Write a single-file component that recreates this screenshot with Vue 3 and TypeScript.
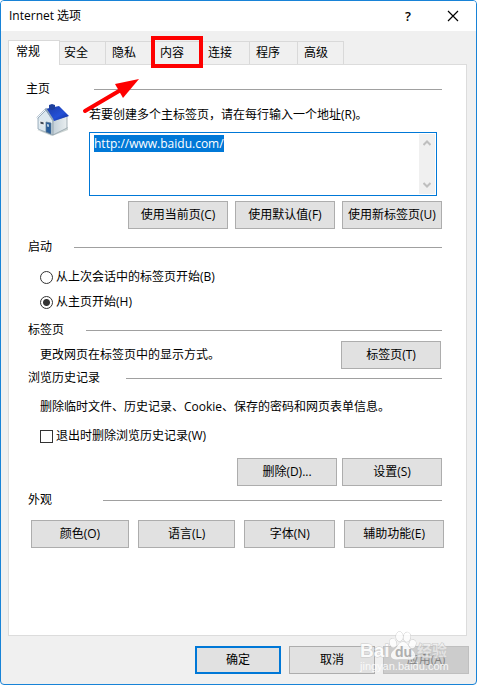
<script setup lang="ts">
import { onMounted, ref } from 'vue'

interface Tab {
  id: string
  label: string
}

const tabs: Tab[] = [
  { id: 'general', label: '常规' },
  { id: 'security', label: '安全' },
  { id: 'privacy', label: '隐私' },
  { id: 'content', label: '内容' },
  { id: 'connections', label: '连接' },
  { id: 'programs', label: '程序' },
  { id: 'advanced', label: '高级' },
]

const activeTab = ref('general')
const homepages = ref('http://www.baidu.com/')
const startup = ref('home')
const deleteOnExit = ref(false)
const homeInput = ref<HTMLTextAreaElement | null>(null)

const homeButtons = ['使用当前页(C)', '使用默认值(F)', '使用新标签页(U)']
const looksButtons = ['颜色(O)', '语言(L)', '字体(N)', '辅助功能(E)']

onMounted(() => {
  homeInput.value?.focus()
  homeInput.value?.select()
})
</script>

<template>
  <div class="dialog">
    <header class="titlebar">
      <h1 class="title">Internet 选项</h1>
      <button class="caption help" type="button">?</button>
      <button class="caption" type="button" aria-label="关闭">
        <svg width="12" height="12" viewBox="0 0 12 12">
          <path d="M1 1L11 11M11 1L1 11" stroke="#000" stroke-width="1.2" fill="none" />
        </svg>
      </button>
    </header>

    <nav class="tabs" role="tablist">
      <button
        v-for="tab in tabs"
        :key="tab.id"
        type="button"
        role="tab"
        class="tab"
        :class="{ active: tab.id === activeTab }"
        :aria-selected="tab.id === activeTab"
        @click="activeTab = tab.id"
      >
        {{ tab.label }}
        <span v-if="tab.id === 'content'" class="marker"></span>
      </button>
    </nav>

    <main class="panel">
      <section>
        <h2 class="heading home-heading">主页</h2>
        <div class="home">
          <svg class="house" width="36" height="34" viewBox="0 0 36 34">
            <defs>
              <linearGradient id="roof" x1="0" y1="0" x2="1" y2="1">
                <stop offset="0" stop-color="#1b3ba6" />
                <stop offset="0.6" stop-color="#2450d6" />
                <stop offset="1" stop-color="#0d2a94" />
              </linearGradient>
              <linearGradient id="side" x1="0" y1="0" x2="1" y2="0">
                <stop offset="0" stop-color="#c3d0d8" />
                <stop offset="1" stop-color="#e9eef0" />
              </linearGradient>
            </defs>
            <path d="M2 26L17 32L33 26L33 23L18 28Z" fill="#a9b5b4" opacity="0.6" />
            <path d="M3 14L11 6L18 17L18 31L3 25Z" fill="#dce8ef" stroke="#8ca0ae" stroke-width="0.8" />
            <path d="M18 17L32 12L32 24L18 31Z" fill="url(#side)" stroke="#92a1aa" stroke-width="0.8" />
            <path d="M10 5L24 2L34 12L19 17Z" fill="url(#roof)" />
            <path d="M14 5V1L17 0L20 1V5L17 6Z" fill="#1d3f9c" />
            <path d="M2 14L11 5L18 16" fill="none" stroke="#8fa5b8" stroke-width="1.5" />
            <path d="M2 14L10 6" stroke="#f3f8fb" stroke-width="1" />
            <path d="M5 17L9 18V21L5 20Z" fill="#3b4652" stroke="#fff" stroke-width="0.8" />
            <path d="M11 18L16 19V30L11 28Z" fill="#285d9a" stroke="#5d7890" stroke-width="0.7" />
            <path d="M12 20L14 20.500V23L12 22.500Z" fill="#b5cce0" />
          </svg>
          <div class="home-form">
            <label class="home-label" for="homepages">若要创建多个主标签页，请在每行输入一个地址(R)。</label>
            <div class="address">
              <textarea id="homepages" ref="homeInput" v-model="homepages" spellcheck="false"></textarea>
              <div class="scroll" aria-hidden="true">
                <svg width="8" height="6" viewBox="0 0 8 6"><path d="M0.500 5L4 1.500L7.500 5" /></svg>
                <svg width="8" height="6" viewBox="0 0 8 6"><path d="M0.500 1L4 4.500L7.500 1" /></svg>
              </div>
            </div>
          </div>
        </div>
        <div class="actions home-actions">
          <button v-for="label in homeButtons" :key="label" type="button" class="btn">{{ label }}</button>
        </div>
      </section>

      <section class="startup">
        <h2 class="heading">启动</h2>
        <div class="radios">
          <label class="option">
            <input v-model="startup" type="radio" name="startup" value="last" />从上次会话中的标签页开始(B)
          </label>
          <label class="option">
            <input v-model="startup" type="radio" name="startup" value="home" />从主页开始(H)
          </label>
        </div>
      </section>

      <section>
        <h2 class="heading">标签页</h2>
        <div class="tab-settings">
          <p>更改网页在标签页中的显示方式。</p>
          <button type="button" class="btn">标签页(T)</button>
        </div>
      </section>

      <section>
        <h2 class="heading history-heading">浏览历史记录</h2>
        <div class="history">
          <p>删除临时文件、历史记录、Cookie、保存的密码和网页表单信息。</p>
          <label class="option">
            <input v-model="deleteOnExit" type="checkbox" />退出时删除浏览历史记录(W)
          </label>
        </div>
        <div class="actions">
          <button type="button" class="btn">删除(D)...</button>
          <button type="button" class="btn">设置(S)</button>
        </div>
      </section>

      <section class="looks">
        <h2 class="heading looks-heading">外观</h2>
        <div class="looks-actions">
          <button v-for="label in looksButtons" :key="label" type="button" class="btn">{{ label }}</button>
        </div>
      </section>
    </main>

    <footer class="footer">
      <button type="button" class="btn primary">确定</button>
      <button type="button" class="btn">取消</button>
      <button type="button" class="btn" disabled>应用(A)</button>
      <svg class="watermark" width="92" height="46" viewBox="0 0 92 46">
        <g class="mark">
          <text x="1" y="27" class="mark-name">Bai</text>
          <ellipse cx="34" cy="13" rx="3.300" ry="4.400" transform="rotate(-18 34 13)" />
          <ellipse cx="40.500" cy="6.500" rx="3.500" ry="4.700" />
          <ellipse cx="48" cy="7" rx="3.500" ry="4.700" transform="rotate(10 48 7)" />
          <ellipse cx="53.500" cy="14" rx="3.300" ry="4.300" transform="rotate(18 53.500 14)" />
          <path d="M44 12C39 12 39 17 35 20C30 24 31 30 38 29.500C42 29 46 29 50 29.500C57 30 58 24 53 20C49 17 49 12 44 12Z" />
          <text x="58" y="26" class="mark-cjk">经验</text>
        </g>
        <text x="36" y="27" class="mark-du">du</text>
        <text x="1" y="40" class="mark-url">jingyan.baidu.com</text>
      </svg>
    </footer>

    <svg class="arrow" width="60" height="38" viewBox="0 0 60 38">
      <path d="M4 35L38 15" stroke="#fe0000" stroke-width="4" stroke-linecap="round" />
      <path d="M58 3L34 8L42 22Z" fill="#fe0000" />
    </svg>
  </div>
</template>

<style>
body {
  margin: 0;
  background: #fff;
}
</style>

<style scoped>
* {
  box-sizing: border-box;
}

.dialog {
  position: relative;
  display: flex;
  flex-direction: column;
  min-height: 100vh;
  border: 1px solid #1883d7;
  border-radius: 4px;
  background: #f0f0f0;
  color: #000;
  font: 12px/16px "Open Sans", "Noto Sans CJK SC", sans-serif;
  white-space: nowrap;
  overflow: hidden;
}

h1,
h2,
p {
  margin: 0;
  font-size: 12px;
  font-weight: 400;
}

button,
input,
textarea {
  margin: 0;
  color: inherit;
  font: inherit;
}

.titlebar {
  display: flex;
  align-items: center;
  height: 30px;
  padding-left: 8px;
  background: #fff;
}

.title {
  flex: 1;
}

.caption {
  display: grid;
  place-items: center;
  width: 46px;
  height: 30px;
  padding: 0;
  border: 0;
  background: none;
}

.help {
  width: 44px;
  font-size: 13px;
  font-weight: 600;
}

.tabs {
  display: flex;
  align-items: flex-end;
  margin: 9px 8px 0 7px;
}

.tab {
  position: relative;
  width: 49px;
  height: 23px;
  margin-right: -1px;
  padding: 0 0 0 6px;
  border: 1px solid #d9d9d9;
  border-bottom: 0;
  background: #f0f0f0;
  text-align: left;
}

.tab:last-child {
  width: 47px;
}

.tab.active {
  z-index: 1;
  width: 52px;
  height: 25px;
  margin-right: -3px;
  margin-bottom: -1px;
  padding: 0 0 2px 7px;
  background: #fff;
}

.marker {
  position: absolute;
  z-index: 2;
  inset: -6px -2px -4px -3px;
  border: 4px solid #fe0000;
}

.panel {
  flex: 1;
  margin: 0 9px 0 7px;
  padding: 16px 24px 16px 19px;
  border: 1px solid #dcdcdc;
  background: #fff;
}

.heading {
  display: flex;
  align-items: center;
  gap: 22px;
  line-height: 16px;
}

.heading::after {
  content: "";
  flex: 1;
  height: 1px;
  background: #a0a0a0;
}

.home-heading {
  gap: 44px;
  margin-left: -2px;
}

.history-heading {
  gap: 26px;
}

.looks-heading {
  gap: 51px;
}

.home {
  display: flex;
  gap: 18px;
  padding: 7px 5px 0 7px;
}

.house {
  flex: none;
}

.home-form {
  flex: 1;
}

.home-label {
  display: block;
  padding: 3px 0 9px;
}

.address {
  display: flex;
  height: 64px;
  padding: 1px;
  border: 1px solid #0078d7;
}

.address textarea {
  flex: 1;
  min-width: 0;
  padding: 1px 3px;
  border: 0;
  outline: 0;
  resize: none;
  overflow: hidden;
  background: #fff;
  font-size: 12px;
  line-height: 17px;
}

.address textarea::selection {
  background: #0078d7;
  color: #fff;
}

.scroll {
  display: flex;
  flex-direction: column;
  justify-content: space-between;
  align-items: center;
  width: 16px;
  padding: 6px 0;
  background: #f0f0f0;
}

.scroll path {
  fill: none;
  stroke: #bfbfbf;
  stroke-width: 2;
}

.actions {
  display: flex;
  justify-content: flex-end;
  gap: 5px;
}

.home-actions {
  gap: 7px;
  padding-top: 5px;
}

.btn {
  width: 100px;
  height: 28px;
  padding: 0;
  border: 1px solid #adadad;
  background: #e1e1e1;
}

.startup {
  padding: 10px 0 12px;
}

.radios {
  display: grid;
  gap: 9px;
  padding: 14px 0 0 12px;
}

.option {
  display: flex;
  align-items: center;
  gap: 3px;
}

.option input {
  appearance: none;
  width: 13px;
  height: 13px;
  border: 1px solid #333;
  background: #fff;
}

.option input[type="radio"] {
  border-radius: 50%;
}

.option input[type="radio"]:checked {
  background: radial-gradient(circle, #333 3px, #fff 4px);
}

.option input[type="checkbox"]:checked {
  background: #333;
  box-shadow: inset 0 0 0 2px #fff;
}

.tab-settings {
  display: flex;
  align-items: center;
  justify-content: space-between;
  padding: 3px 1px 1px 12px;
}

.history {
  display: grid;
  gap: 13px;
  padding: 13px 0 14px 12px;
}

.looks {
  padding-top: 6px;
}

.looks-actions {
  display: grid;
  grid-template-columns: 98fr 98fr 91fr 100fr;
  gap: 9px;
  margin-right: -2px;
  padding: 12px 0 0 3px;
}

.looks-actions .btn {
  width: auto;
}

.footer {
  position: relative;
  display: flex;
  justify-content: flex-end;
  gap: 8px;
  padding: 10px 7px;
}

.footer .btn {
  width: 86px;
}

.footer .primary {
  border: 2px solid #0078d7;
}

.footer .btn:disabled {
  border-color: #bfbfbf;
  background: #ccc;
  color: #838383;
}

.watermark {
  position: absolute;
  right: 25px;
  bottom: 8px;
  opacity: 0.85;
  pointer-events: none;
}

.mark {
  fill: #fff;
  stroke: #c4c4c4;
  stroke-width: 1px;
  paint-order: stroke;
}

.mark-name {
  font: 700 19px "Liberation Sans", sans-serif;
}

.mark-cjk {
  font: 700 15px "Noto Sans CJK SC", sans-serif;
  fill-opacity: 0.6;
}

.mark-du {
  fill: #aaa;
  font: 700 14px "Liberation Sans", sans-serif;
}

.mark-url {
  fill: #fff;
  font: 11px "Liberation Sans", sans-serif;
}

.arrow {
  position: absolute;
  top: 75px;
  left: 80px;
  pointer-events: none;
}
</style>
